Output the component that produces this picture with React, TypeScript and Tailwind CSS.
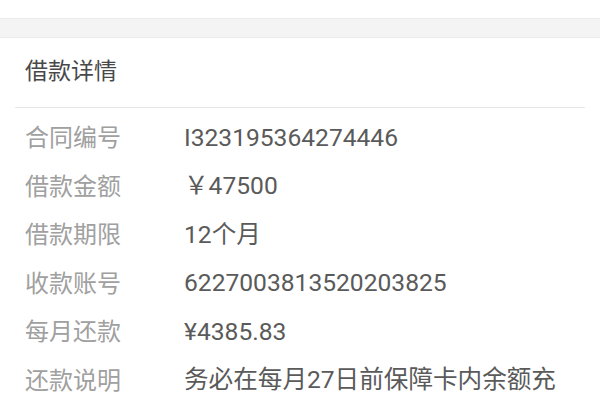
const rows = [
  { label: "合同编号", value: "I323195364274446" },
  { label: "借款金额", value: "￥47500" },
  { label: "借款期限", value: "12个月" },
  { label: "收款账号", value: "6227003813520203825" },
  { label: "每月还款", value: "¥4385.83" },
  { label: "还款说明", value: "务必在每月27日前保障卡内余额充" },
]

export default function App() {
  return (
    <div
      className="w-[600px] h-[400px] overflow-hidden bg-white"
      style={{ fontFamily: 'Roboto, "Noto Sans CJK SC", sans-serif' }}
    >
      <div className="h-[18px] bg-white" />
      <div className="h-[20px] bg-[#f4f4f4] border-y border-[#ececec]" />
      <div className="px-[15px]">
        <div className="h-[69px] flex items-center px-[10px] text-[23px] text-[#484848]">借款详情</div>
        <div className="h-px bg-[#e6e6e6]" />
        <div className="pt-[6px] px-[10px]">
          {rows.map((row) => (
            <div key={row.label} className="flex items-center h-[48.5px] leading-none">
              <span className="w-[159px] shrink-0 text-[24px] text-[#a0a0a0]">{row.label}</span>
              <span className="text-[24.6px] text-[#5a5a5a] whitespace-nowrap">{row.value}</span>
            </div>
          ))}
        </div>
      </div>
    </div>
  )
}
